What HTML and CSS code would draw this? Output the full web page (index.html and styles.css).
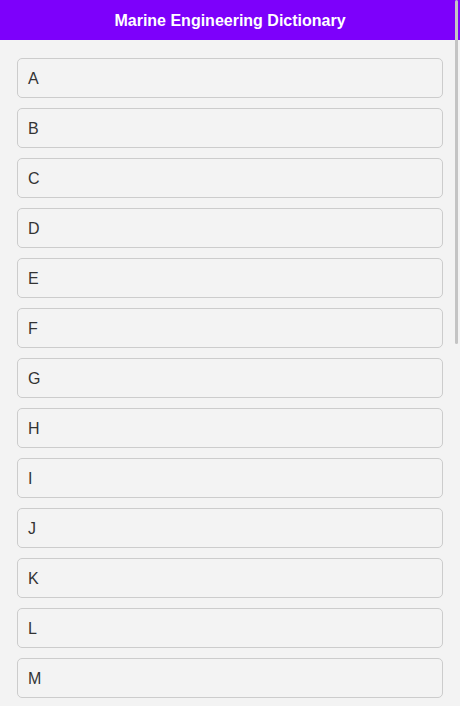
FILE: index.html
```html
<!DOCTYPE html>
<html lang="en">
<head>
<meta charset="utf-8">
<title>Marine Engineering Dictionary</title>
<link rel="stylesheet" href="styles.css">
</head>
<body>
<header class="topbar">
  <h1 class="title">Marine Engineering Dictionary</h1>
</header>
<main class="letters">
  <button class="letter">A</button>
  <button class="letter">B</button>
  <button class="letter">C</button>
  <button class="letter">D</button>
  <button class="letter">E</button>
  <button class="letter">F</button>
  <button class="letter">G</button>
  <button class="letter">H</button>
  <button class="letter">I</button>
  <button class="letter">J</button>
  <button class="letter">K</button>
  <button class="letter">L</button>
  <button class="letter">M</button>
  <button class="letter">N</button>
  <button class="letter">O</button>
  <button class="letter">P</button>
  <button class="letter">Q</button>
  <button class="letter">R</button>
  <button class="letter">S</button>
  <button class="letter">T</button>
  <button class="letter">U</button>
  <button class="letter">V</button>
  <button class="letter">W</button>
  <button class="letter">X</button>
  <button class="letter">Y</button>
  <button class="letter">Z</button>
</main>
<div class="scroll-thumb"></div>
</body>
</html>
```
FILE: styles.css
```css
html::-webkit-scrollbar {
  width: 0;
  height: 0;
}
html {
  scrollbar-width: none;
}
body {
  margin: 0;
  background: #f3f3f3;
  font-family: "Liberation Sans", Arial, sans-serif;
  color: #333;
}
.topbar {
  height: 40px;
  box-sizing: border-box;
  padding-top: 2px;
  background: #7d00fb;
  display: flex;
  align-items: center;
  justify-content: center;
}
.title {
  margin: 0;
  font-size: 16px;
  font-weight: bold;
  color: #fff;
}
.letters {
  display: flex;
  flex-direction: column;
  gap: 10px;
  padding: 18px 17px 105px;
}
.letter {
  height: 40px;
  box-sizing: border-box;
  border: 1px solid #cccccc;
  border-radius: 5px;
  background: #f3f3f3;
  text-align: left;
  padding: 2px 10px 0;
  font-family: "Liberation Sans", Arial, sans-serif;
  font-size: 16px;
  color: #333;
}
.scroll-thumb {
  position: fixed;
  top: 0;
  right: 2px;
  width: 3px;
  height: 344px;
  background: #c4c4c4;
  border-radius: 2px;
}
```
